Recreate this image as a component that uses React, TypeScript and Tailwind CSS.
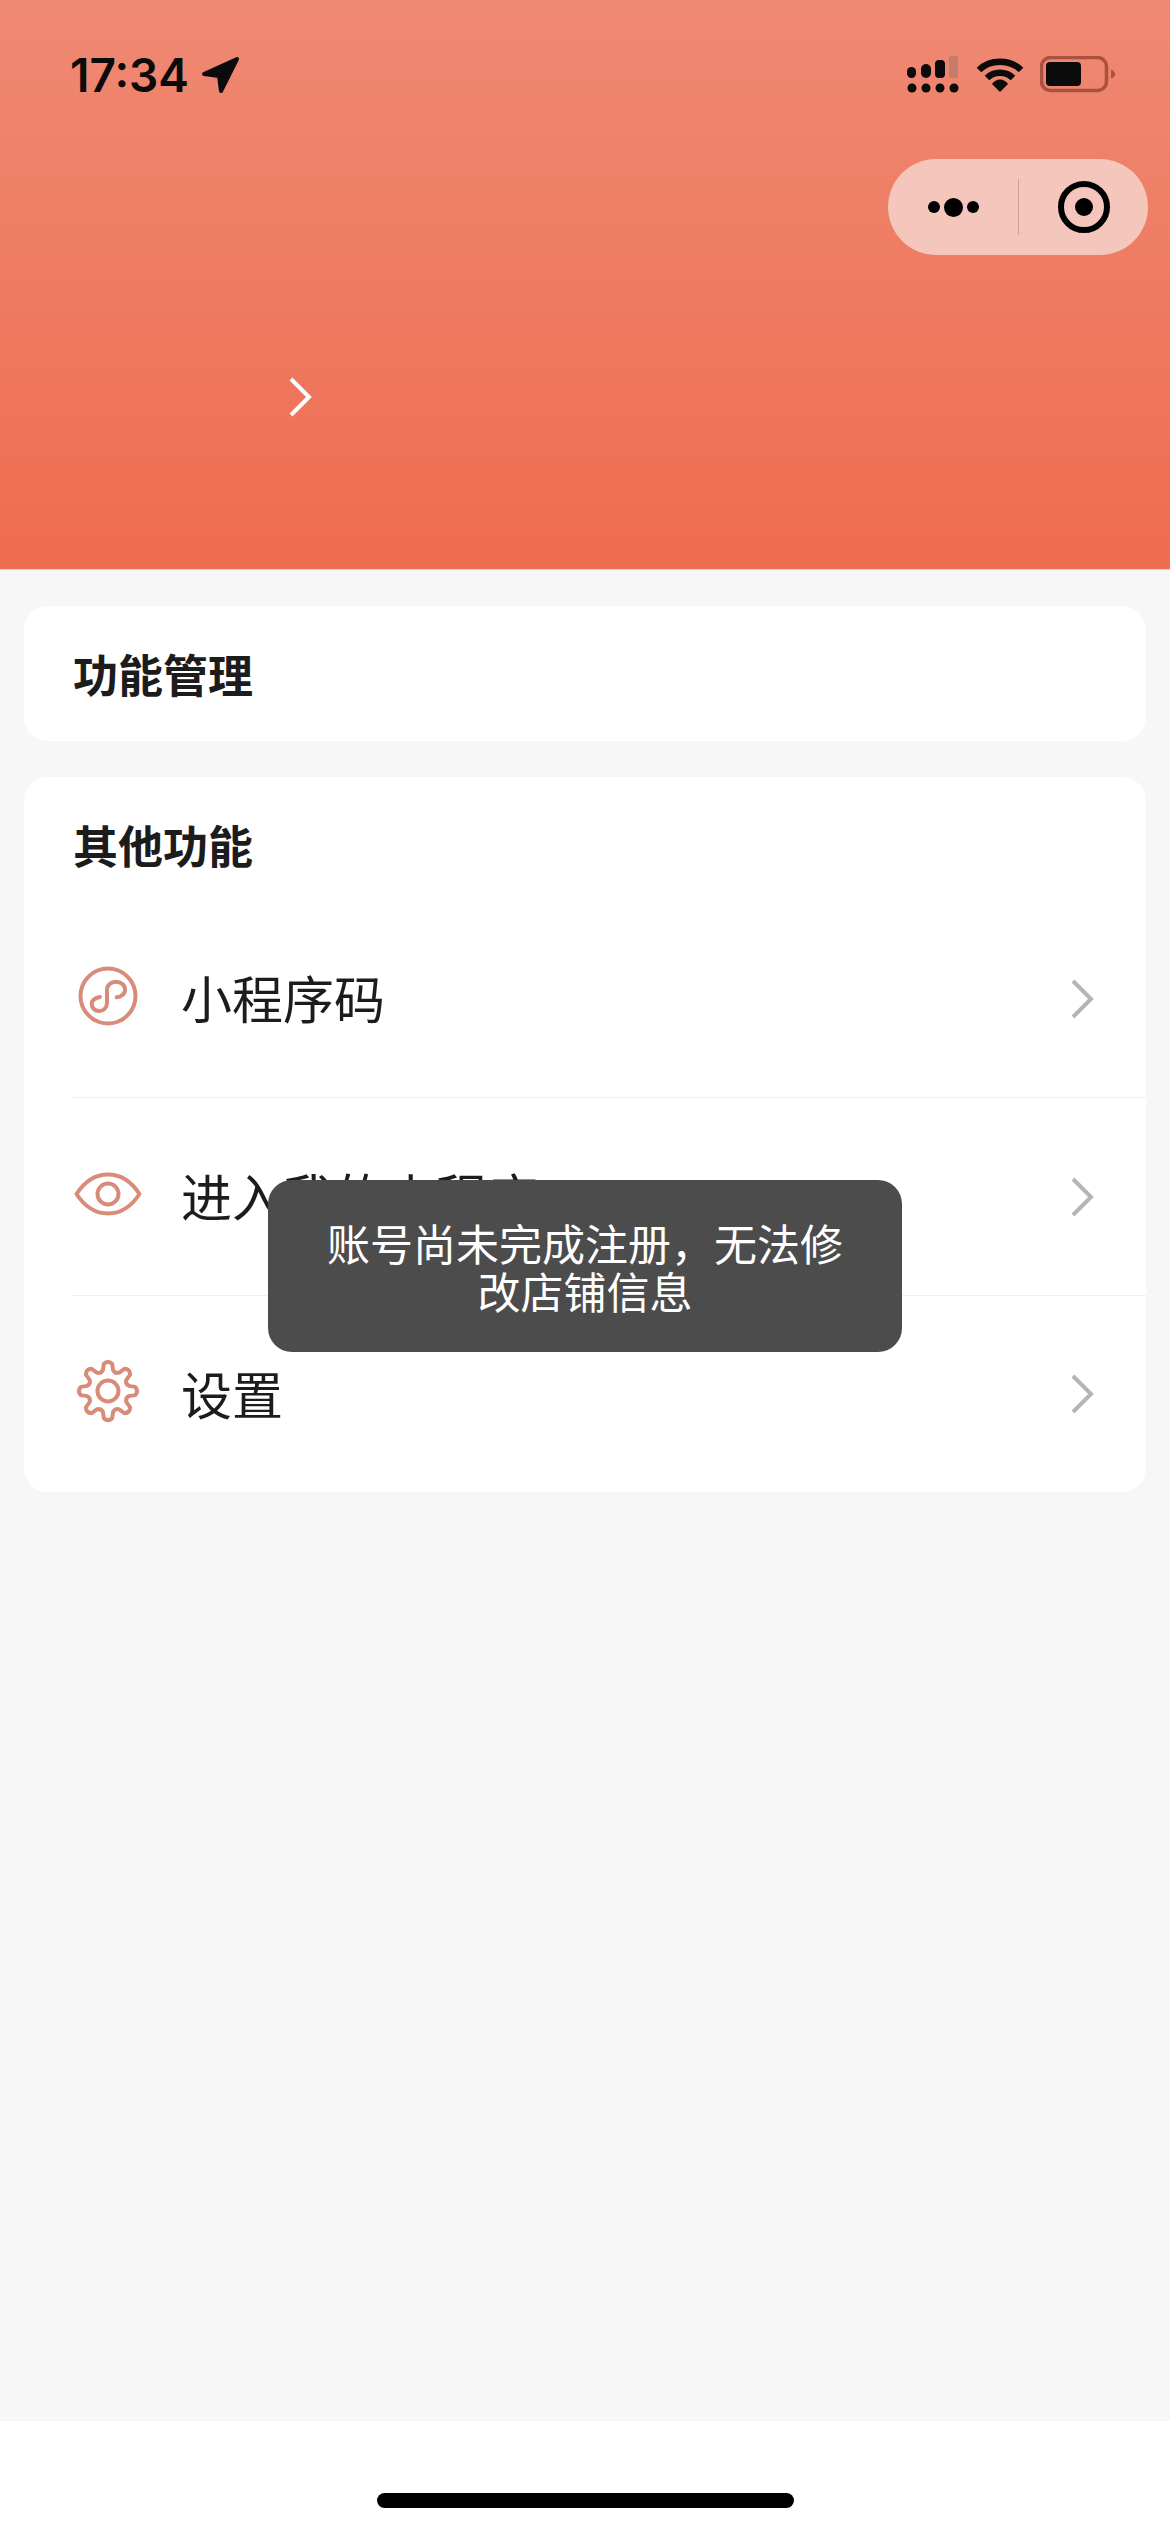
import React from "react";

const gearPath = () => {
  const cx = 32;
  const cy = 32;
  const parts: string[] = [];
  for (let i = 0; i < 8; i++) {
    const a = (i * Math.PI) / 4 - Math.PI / 2;
    const pt = (r: number, d: number) =>
      `${(cx + r * Math.cos(a + d)).toFixed(2)} ${(cy + r * Math.sin(a + d)).toFixed(2)}`;
    parts.push(
      `${i === 0 ? "M" : "L"}${pt(21.5, -0.24)} L${pt(27.5, -0.15)} Q${pt(31, 0)} ${pt(27.5, 0.15)} L${pt(21.5, 0.24)} Q${pt(18.5, 0.39)} ${pt(21.5, 0.54)}`
    );
  }
  return parts.join(" ") + " Z";
};

const Chevron = () => (
  <svg width="24" height="40" viewBox="0 0 24 40" fill="none">
    <path d="M3 2l18 18L3 38" stroke="#b5b5b5" strokeWidth="4" />
  </svg>
);

const MiniIcon = () => (
  <svg width="60" height="60" viewBox="0 0 60 60" fill="none" stroke="#d88b79" strokeWidth="4" strokeLinecap="round">
    <circle cx="30" cy="30" r="27.5" />
    <path d="M22 31C17 32 13.7 34 13.7 38C13.7 42 17 45 21 45C26 45 29 41 29 37L29 24C29 19 33 15.7 38 15.7C43 15.7 47 19 47 24C47 28 43 31 38.7 31.3" />
  </svg>
);

const EyeIcon = () => (
  <svg width="68" height="44" viewBox="0 0 68 44" fill="none" stroke="#d88b79" strokeWidth="4">
    <path d="M2.5 22C11 9 21 2.5 34 2.5S57 9 65.5 22C57 35 47 41.5 34 41.5S11 35 2.5 22Z" strokeLinejoin="round" />
    <circle cx="34" cy="22" r="10.5" />
  </svg>
);

const GearIcon = () => (
  <svg width="64" height="64" viewBox="0 0 64 64" fill="none" stroke="#d88b79" strokeWidth="4" strokeLinejoin="round">
    <path d={gearPath()} />
    <circle cx="32" cy="32" r="10.5" />
  </svg>
);

const rows = [
  { label: "小程序码", icon: <MiniIcon />, cls: "h-[198px] border-b border-[#f0f0f0]" },
  { label: "进入我的小程序", icon: <EyeIcon />, cls: "h-[198px] border-b border-[#f0f0f0]" },
  { label: "设置", icon: <GearIcon />, cls: "h-[196px]" },
];

export default function App() {
  return (
    <div className="relative w-full h-[2532px] overflow-hidden flex flex-col bg-[#f7f7f7] font-['Noto_Sans_CJK_SC',sans-serif] text-[#1c1c1c]">
      {/* Header */}
      <div className="h-[570px] shrink-0 bg-gradient-to-b from-[#ef8973] to-[#ee6c50] border-b border-[#f6cdbd]">
        <div className="h-[159px] pt-[56px] pl-[70px] pr-[54px] flex items-start justify-between">
          <div className="flex items-center h-[37px] gap-[12px]">
            <span className="font-['Inter',sans-serif] font-semibold text-[46px] leading-none text-[#0b0b0b]">17:34</span>
            <svg width="40" height="40" viewBox="0 0 40 40" fill="#0b0b0b" stroke="#0b0b0b" strokeWidth="4" strokeLinejoin="round">
              <path d="M3 19L36 4L20 36L18 21Z" />
            </svg>
          </div>
          <div className="flex items-start gap-[17px]">
            <svg width="52" height="37" viewBox="0 0 52 37" fill="#0b0b0b">
              <rect x="0" y="11" width="9" height="11" rx="4.5" />
              <rect x="14" y="8" width="10" height="14" rx="5" />
              <rect x="28" y="4" width="10" height="18" rx="4" />
              <rect x="42" y="0" width="9" height="22" rx="2" fill="#c67c6a" />
              <circle cx="5" cy="32" r="4.5" />
              <circle cx="19" cy="32" r="4.5" />
              <circle cx="33" cy="32" r="4.5" />
              <circle cx="47" cy="32" r="4.5" />
            </svg>
            <svg width="48" height="36" viewBox="0 0 48 36" fill="none" stroke="#0b0b0b" strokeWidth="6.5">
              <path d="M3 14C14 3 34 3 45 14" />
              <path d="M11 22C18 15 30 15 37 22" />
              <path d="M16 28L24 36L32 28C28 22 20 22 16 28Z" fill="#0b0b0b" stroke="none" />
            </svg>
            <svg width="76" height="37" viewBox="0 0 76 37" fill="none" className="-ml-[1px]">
              <rect x="1.5" y="1.5" width="65" height="33" rx="9" stroke="#a9523f" strokeWidth="3.5" />
              <rect x="6" y="6" width="35" height="24" rx="4" fill="#0b0b0b" />
              <path d="M71 13.5C73.5 14.5 75 16 75 18S73.5 21.5 71 22.5Z" fill="#a9523f" />
            </svg>
          </div>
        </div>
        <div className="flex justify-end pr-[22px]">
          <div className="w-[260px] h-[96px] rounded-full bg-[#f4c6bc] flex items-center">
            <div className="w-[130px] flex items-center justify-center gap-[4px]">
              <span className="w-[12px] h-[12px] rounded-full bg-black" />
              <span className="w-[19px] h-[19px] rounded-full bg-black" />
              <span className="w-[12px] h-[12px] rounded-full bg-black" />
            </div>
            <div className="w-px h-[56px] bg-[#c9a096]" />
            <div className="flex-1 flex items-center justify-center">
              <div className="w-[52px] h-[52px] rounded-full border-[6px] border-black flex items-center justify-center">
                <span className="w-[18px] h-[18px] rounded-full bg-black" />
              </div>
            </div>
          </div>
        </div>
        <div className="pl-[288px] pt-[122px]">
          <svg width="24" height="40" viewBox="0 0 24 40" fill="none">
            <path d="M3 2l18 18L3 38" stroke="#ffffff" strokeWidth="4" />
          </svg>
        </div>
      </div>

      {/* Cards */}
      <div className="flex-1 px-[24px] pt-[36px] flex flex-col gap-[36px]">
        <div className="h-[135px] rounded-[24px] bg-white pl-[49px] flex items-center">
          <span className="text-[45px] font-bold leading-none">功能管理</span>
        </div>
        <div className="rounded-[24px] bg-white">
          <div className="h-[123px] pl-[49px] pt-[45px]">
            <span className="block text-[45px] font-bold leading-none">其他功能</span>
          </div>
          <div className="pl-[48px]">
            {rows.map((r) => (
              <div key={r.label} className={`${r.cls} flex items-center pr-[52px]`}>
                <div className="w-[72px] flex justify-center -mt-[6px]">{r.icon}</div>
                <span className="ml-[37px] flex-1 text-[51px] leading-none -mt-[2px]">{r.label}</span>
                <Chevron />
              </div>
            ))}
          </div>
        </div>
      </div>

      {/* Home indicator */}
      <div className="h-[111px] shrink-0 bg-white flex justify-center pt-[72px]">
        <div className="w-[417px] h-[15px] rounded-full bg-black" />
      </div>

      {/* Toast */}
      <div className="absolute left-[268px] top-[1180px] w-[634px] h-[172px] rounded-[24px] bg-[#4c4c4c] px-[50px] flex items-center justify-center text-center text-white text-[43px] leading-[48px]">
        账号尚未完成注册，无法修改店铺信息
      </div>
    </div>
  );
}
